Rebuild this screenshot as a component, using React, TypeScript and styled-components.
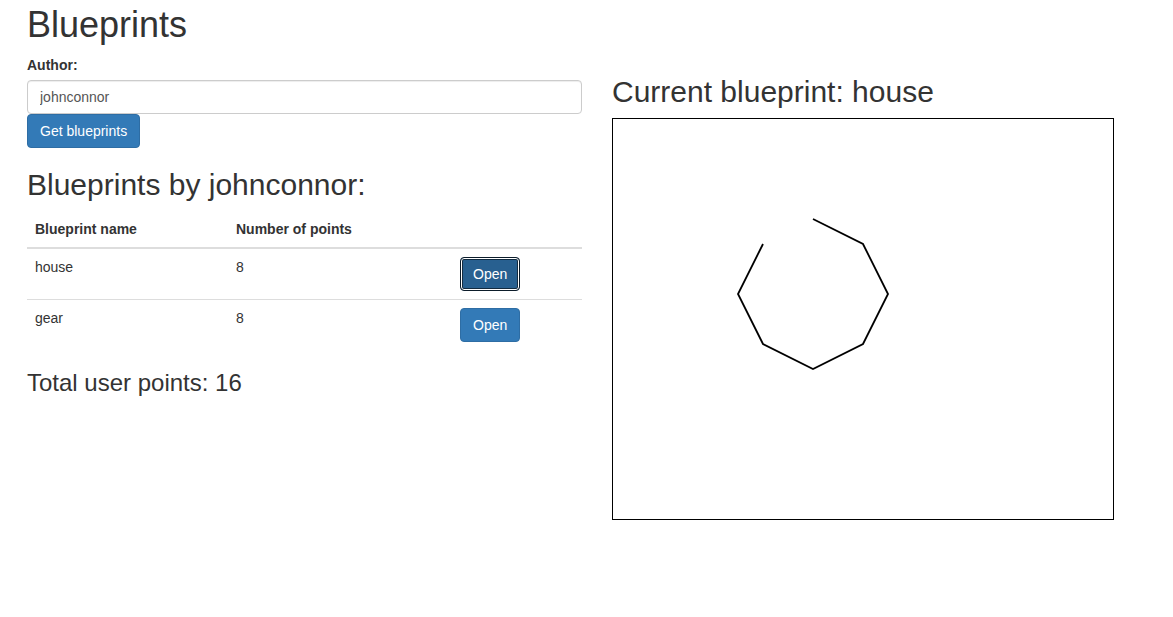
import React from 'react';
import styled, { createGlobalStyle } from 'styled-components';

const GlobalStyle = createGlobalStyle`
  * {
    box-sizing: border-box;
  }

  html, body {
    margin: 0;
    padding: 0;
    background: #fff;
    color: #333;
    font-family: "Liberation Sans", Arial, Helvetica, sans-serif;
    font-size: 14px;
    line-height: 1.42857143;
  }

  input, button {
    font-family: inherit;
  }
`;

const Page = styled.div`
  padding: 0 27px;
  width: 1173px;
`;

const Title = styled.h1`
  margin: 5px 0 10px;
  font-size: 36px;
  font-weight: 500;
  line-height: 1.1;
`;

const Row = styled.div`
  display: flex;
  gap: 30px;
  align-items: flex-start;
`;

const Column = styled.div<{ $width: number }>`
  width: ${p => p.$width}px;
  flex: none;
`;

const Label = styled.label`
  display: block;
  font-weight: bold;
  margin-bottom: 5px;
`;

const Input = styled.input`
  display: block;
  width: 100%;
  height: 34px;
  padding: 6px 12px;
  font-size: 14px;
  color: #555;
  background: #fff;
  border: 1px solid #ccc;
  border-radius: 4px;
  box-shadow: inset 0 1px 1px rgba(0, 0, 0, 0.075);
  outline: none;
`;

const Button = styled.button<{ $focused?: boolean }>`
  display: inline-block;
  height: 34px;
  padding: 6px 12px;
  font-size: 14px;
  line-height: 1.42857143;
  color: #fff;
  background-color: ${p => (p.$focused ? '#286090' : '#337ab7')};
  border: 1px solid ${p => (p.$focused ? '#0c1c2a' : '#2e6da4')};
  border-radius: 4px;
  box-shadow: ${p => (p.$focused ? 'inset 0 0 0 1px #fff, inset 0 0 0 2px #122b40' : 'none')};
  cursor: pointer;
`;

const SubTitle = styled.h2`
  margin: 20px 0 10px;
  font-size: 30px;
  font-weight: 500;
  line-height: 1.1;
`;

const Total = styled.h3`
  margin: 20px 0 10px;
  font-size: 24px;
  font-weight: 500;
  line-height: 1.1;
`;

const Table = styled.table`
  width: 100%;
  border-collapse: collapse;
  border-spacing: 0;
  margin-bottom: 20px;
  table-layout: fixed;
`;

const HeadCell = styled.th<{ $width?: number }>`
  width: ${p => (p.$width ? `${p.$width}px` : 'auto')};
  padding: 8px;
  text-align: left;
  font-size: 14px;
  font-weight: bold;
  line-height: 20px;
  vertical-align: bottom;
  border-bottom: 2px solid #ddd;
`;

const Cell = styled.td`
  padding: 8px;
  font-size: 14px;
  line-height: 20px;
  vertical-align: top;
  border-top: 1px solid #ddd;
`;

const Canvas = styled.div`
  width: 502px;
  height: 402px;
  border: 1px solid #000;
  background: #fff;

  svg {
    display: block;
  }
`;

const blueprints = [
  { name: 'house', points: 8 },
  { name: 'gear', points: 8 },
];

const housePoints = [
  [200, 100], [250, 125], [275, 175], [250, 225],
  [200, 250], [150, 225], [125, 175], [150, 125],
];

export default function App() {
  const total = blueprints.reduce((sum, b) => sum + b.points, 0);

  return (
    <>
      <GlobalStyle />
      <Page>
        <Title>Blueprints</Title>
        <Row>
          <Column $width={555}>
            <Label htmlFor="author">Author:</Label>
            <Input id="author" defaultValue="johnconnor" />
            <Button>Get blueprints</Button>

            <SubTitle>Blueprints by johnconnor:</SubTitle>
            <Table>
              <thead>
                <tr>
                  <HeadCell $width={201}>Blueprint name</HeadCell>
                  <HeadCell $width={224}>Number of points</HeadCell>
                  <HeadCell />
                </tr>
              </thead>
              <tbody>
                {blueprints.map((b, i) => (
                  <tr key={b.name}>
                    <Cell>{b.name}</Cell>
                    <Cell>{b.points}</Cell>
                    <Cell>
                      <Button $focused={i === 0}>Open</Button>
                    </Cell>
                  </tr>
                ))}
              </tbody>
            </Table>
            <Total>Total user points: {total}</Total>
          </Column>

          <Column $width={502}>
            <SubTitle>Current blueprint: house</SubTitle>
            <Canvas>
              <svg width="500" height="400" viewBox="0 0 500 400">
                <polyline
                  points={housePoints.map(p => p.join(',')).join(' ')}
                  fill="none"
                  stroke="#000"
                  strokeWidth="1.8"
                />
              </svg>
            </Canvas>
          </Column>
        </Row>
      </Page>
    </>
  );
}
